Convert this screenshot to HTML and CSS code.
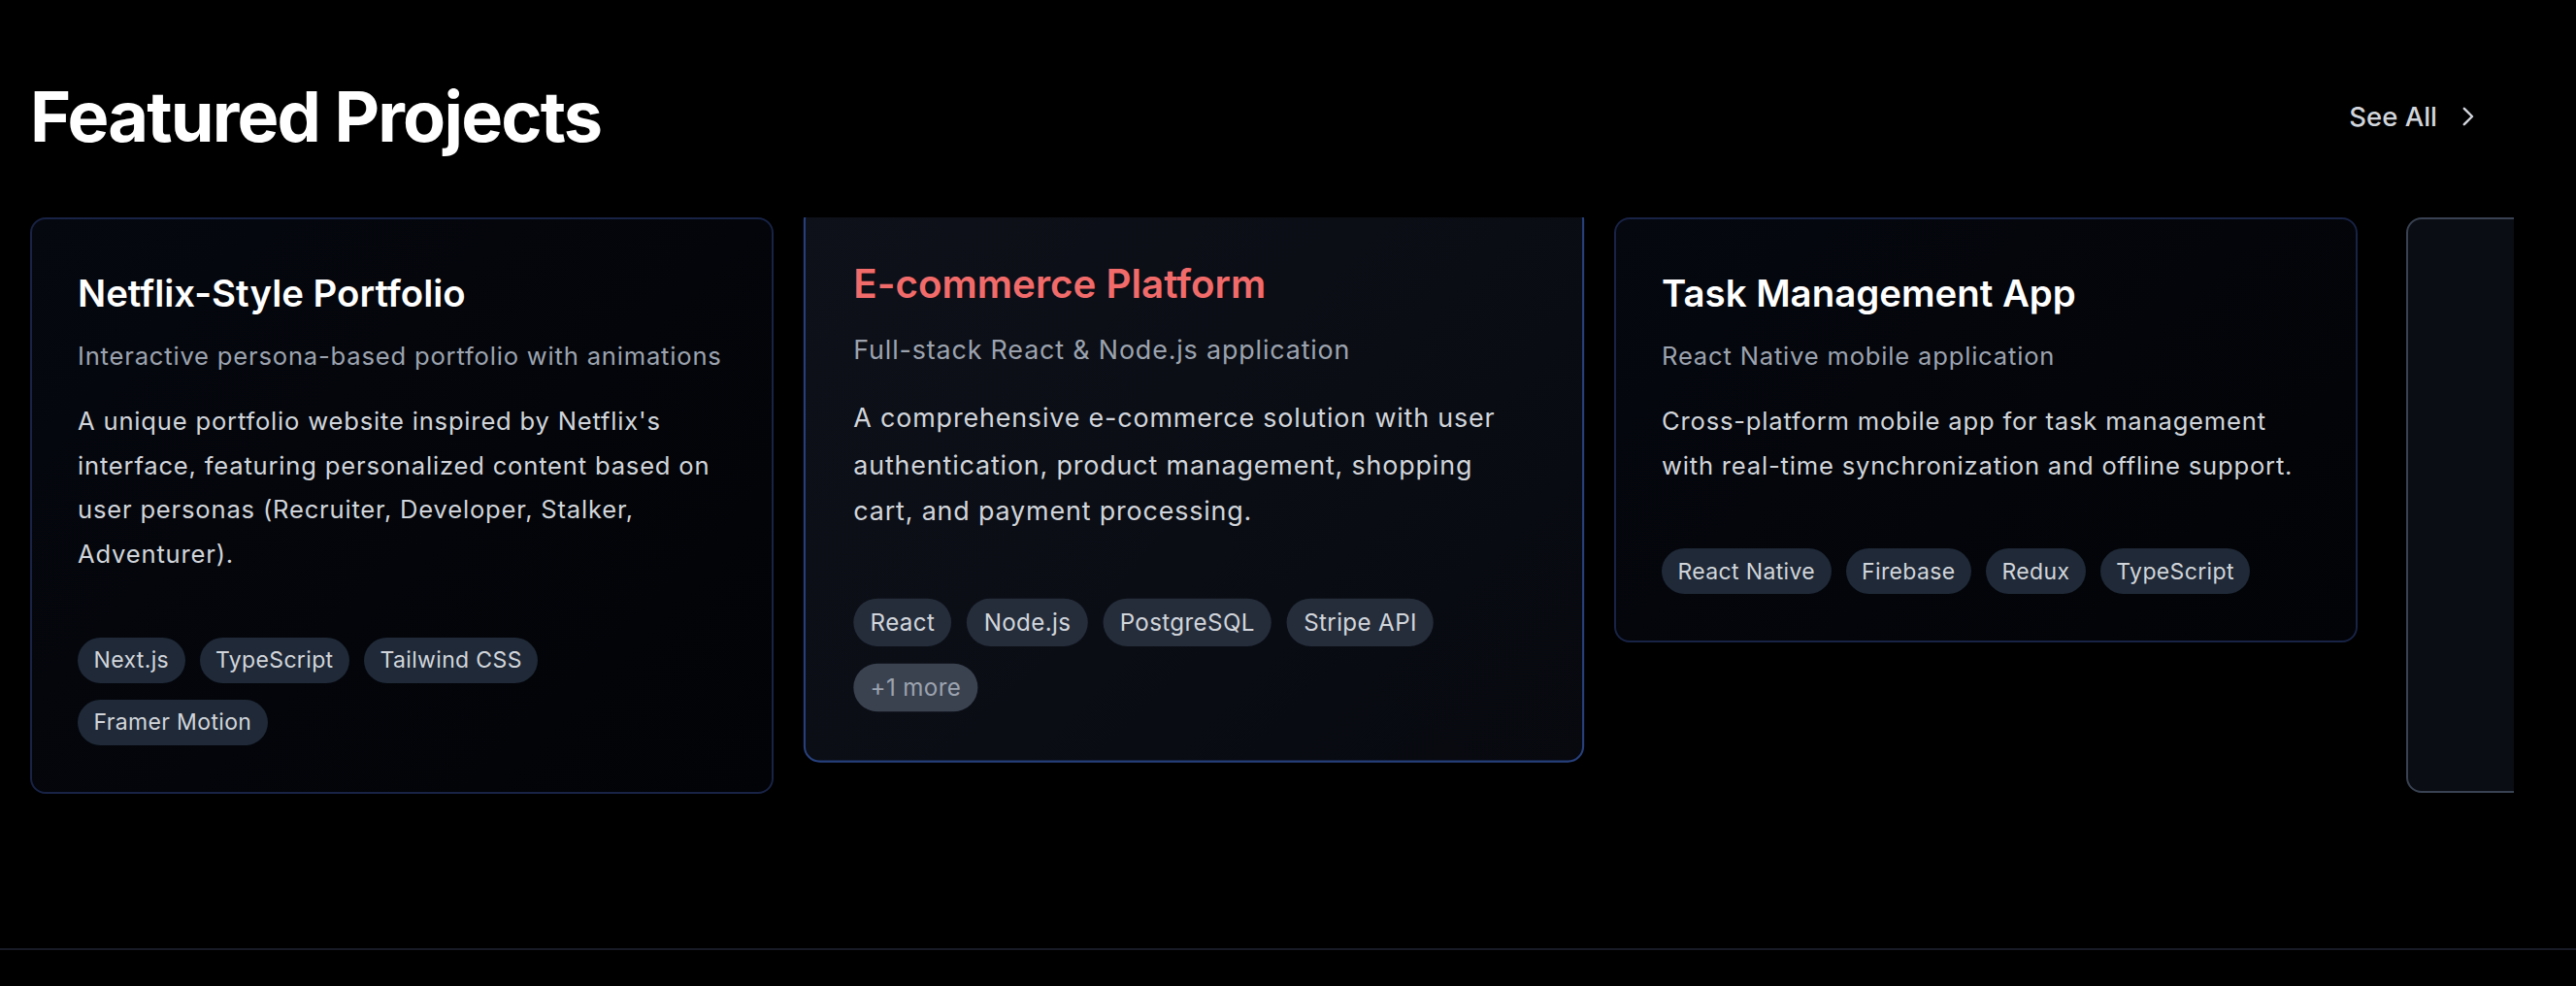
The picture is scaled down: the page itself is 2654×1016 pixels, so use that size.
FILE: index.html
```html
<!DOCTYPE html>
<html lang="en">
<head>
<meta charset="utf-8">
<title>Featured Projects</title>
<link rel="stylesheet" href="styles.css">
</head>
<body>
<main class="page">
  <section class="projects">
    <div class="projects-header">
      <h2 class="projects-title">Featured Projects</h2>
      <a class="see-all" href="#">
        <span>See All</span>
        <svg class="see-all-icon" width="12" height="20" viewBox="0 0 12 20" aria-hidden="true">
          <polyline points="1.8,1.8 10,10 1.8,18.2" fill="none" stroke="currentColor" stroke-width="2.4" stroke-linecap="round" stroke-linejoin="round"/>
        </svg>
      </a>
    </div>
    <div class="carousel">
      <article class="card">
        <h3 class="card-title">Netflix-Style Portfolio</h3>
        <p class="card-subtitle">Interactive persona-based portfolio with animations</p>
        <p class="card-desc">A unique portfolio website inspired by Netflix's interface, featuring personalized content based on user personas (Recruiter, Developer, Stalker, Adventurer).</p>
        <ul class="tags">
          <li class="tag">Next.js</li>
          <li class="tag">TypeScript</li>
          <li class="tag">Tailwind CSS</li>
          <li class="tag">Framer Motion</li>
        </ul>
      </article>
      <article class="card card-active">
        <h3 class="card-title">E-commerce Platform</h3>
        <p class="card-subtitle">Full-stack React &amp; Node.js application</p>
        <p class="card-desc">A comprehensive e-commerce solution with user authentication, product management, shopping cart, and payment processing.</p>
        <ul class="tags">
          <li class="tag">React</li>
          <li class="tag">Node.js</li>
          <li class="tag">PostgreSQL</li>
          <li class="tag">Stripe API</li>
          <li class="tag tag-more">+1 more</li>
        </ul>
      </article>
      <article class="card">
        <h3 class="card-title">Task Management App</h3>
        <p class="card-subtitle">React Native mobile application</p>
        <p class="card-desc">Cross-platform mobile app for task management with real-time synchronization and offline support.</p>
        <ul class="tags">
          <li class="tag">React Native</li>
          <li class="tag">Firebase</li>
          <li class="tag">Redux</li>
          <li class="tag">TypeScript</li>
        </ul>
      </article>
      <article class="card card-placeholder"></article>
    </div>
  </section>
  <footer class="site-footer"></footer>
</main>
</body>
</html>
```

FILE: styles.css
```css
* {
  box-sizing: border-box;
}

html, body {
  margin: 0;
  padding: 0;
  background: #000;
}

body {
  font-family: Inter, "Noto Sans", "Liberation Sans", sans-serif;
  color: #fff;
  width: 2654px;
  height: 1016px;
  overflow: hidden;
}

.page {
  display: flex;
  flex-direction: column;
}

.projects {
  padding: 84px 0 159px 31px;
}

.projects-header {
  display: flex;
  align-items: center;
  justify-content: space-between;
  padding-right: 105px;
}

.projects-title {
  margin: 0;
  font-size: 72px;
  line-height: 72px;
  font-weight: 700;
  letter-spacing: -1.8px;
  color: #fff;
}

.see-all {
  display: flex;
  align-items: center;
  gap: 26px;
  color: #d1d5db;
  font-size: 27.5px;
  font-weight: 500;
  text-decoration: none;
}

.see-all-icon {
  display: block;
}

.carousel {
  margin-top: 68px;
  width: 2559px;
  display: flex;
  align-items: flex-start;
  gap: 50px;
  overflow: hidden;
}

.card {
  flex: 0 0 766px;
  width: 766px;
  padding: 48px 47px;
  border: 2px solid #182345;
  border-radius: 16px;
  background: linear-gradient(135deg, #060810 0%, #03050a 55%, #020306 100%);
}

.card-active {
  transform: scale(1.05);
  border-color: #27407c;
  background: linear-gradient(135deg, #0e1119 0%, #0a0d14 55%, #07090f 100%);
}

.card-placeholder {
  height: 593px;
  border-color: #394252;
  background: #0a0d13;
}

.card-title {
  margin: 0;
  font-size: 38.4px;
  line-height: 57.6px;
  font-weight: 600;
  color: #fff;
}

.card-active .card-title {
  color: #f26b6b;
}

.card-subtitle {
  margin: 16px 0 0;
  font-size: 25.6px;
  line-height: 38.4px;
  letter-spacing: 0.8px;
  color: #9ca3af;
}

.card-desc {
  margin: 25px 0 0;
  font-size: 25.6px;
  line-height: 45.7px;
  letter-spacing: 0.8px;
  color: #d1d5db;
}

.tags {
  list-style: none;
  margin: 63px 0 0;
  padding: 0;
  display: flex;
  flex-wrap: wrap;
  column-gap: 15px;
  row-gap: 17px;
}

.tag {
  height: 47px;
  padding: 0 16.5px;
  display: flex;
  align-items: center;
  border-radius: 24px;
  background: #1f2937;
  color: #d1d5db;
  font-size: 23px;
  letter-spacing: 0.35px;
}

.card-active .tag {
  background: #252d3b;
}

.card-active .tag-more {
  background: #3a4250;
  color: #9ca3af;
}

.site-footer {
  height: 60px;
  border-top: 2px solid #181a25;
}
```
